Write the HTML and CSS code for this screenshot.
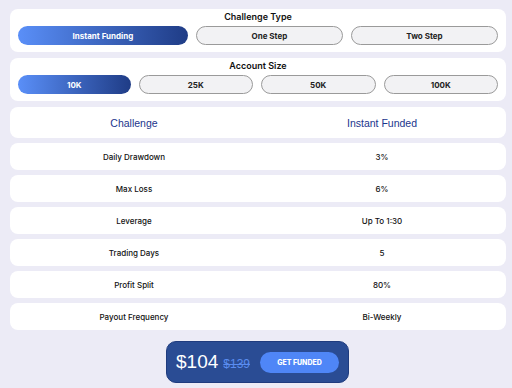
FILE: index.html
```html
<!DOCTYPE html>
<html lang="en">
<head>
    <meta charset="UTF-8">
    <meta name="viewport" content="width=device-width, initial-scale=1.0">
    <title>Challenge Picker</title>
    <link rel="stylesheet" href="styles.css">
</head>
<body>

    <div class="card picker">
        <h3>Challenge Type</h3>
        <div class="options">
            <button class="opt wide active">Instant Funding</button>
            <button class="opt">One Step</button>
            <button class="opt">Two Step</button>
        </div>
    </div>

    <div class="card picker">
        <h3>Account Size</h3>
        <div class="options">
            <button class="opt active">10K</button>
            <button class="opt">25K</button>
            <button class="opt">50K</button>
            <button class="opt">100K</button>
        </div>
    </div>

    <div class="rules">
        <div class="row head"><span>Challenge</span><span>Instant Funded</span></div>
        <div class="row"><span>Daily Drawdown</span><span>3%</span></div>
        <div class="row"><span>Max Loss</span><span>6%</span></div>
        <div class="row"><span>Leverage</span><span>Up To 1:30</span></div>
        <div class="row"><span>Trading Days</span><span>5</span></div>
        <div class="row"><span>Profit Split</span><span>80%</span></div>
        <div class="row"><span>Payout Frequency</span><span>Bi-Weekly</span></div>
    </div>

    <div class="checkout">
        <div class="price">
            <span class="now">$104</span>
            <span class="was">$139</span>
        </div>
        <button class="buy">GET FUNDED</button>
    </div>

</body>
</html>
```

FILE: styles.css
```css
body {
    font-family: Inter, "Liberation Sans", sans-serif;
    background-color: #ecebf6;
    color: #111111;
    margin: 0;
    padding: 9px 6px 0 10px;
}

.card {
    background-color: #ffffff;
    border-radius: 8px;
}

.picker {
    padding: 2px 8px 7px 8px;
    margin-bottom: 6px;
}

.picker h3 {
    margin: 0 0 3px 0;
    text-align: center;
    font-size: 9px;
    font-weight: 600;
    line-height: 12px;
    color: #111111;
}

.options {
    display: flex;
    gap: 8px;
}

.opt {
    flex: 1;
    height: 19px;
    border: 1px solid #9a9a9a;
    border-radius: 10px;
    background-color: #f2f2f4;
    font-family: Inter, sans-serif;
    font-size: 8px;
    font-weight: 700;
    color: #222222;
    cursor: pointer;
    padding: 0;
}

.opt.wide {
    flex: 1.17;
}

.opt.active {
    border: none;
    color: #ffffff;
    background: linear-gradient(90deg, #5a8ff8 0%, #1f3c86 100%);
}

.picker + .rules {
    margin-top: 3px;
}

.rules {
    display: flex;
    flex-direction: column;
    gap: 5px;
}

.row {
    display: grid;
    grid-template-columns: 1fr 1fr;
    align-items: center;
    height: 27px;
    background-color: #ffffff;
    border-radius: 8px;
    font-size: 8px;
    font-weight: 500;
    text-align: center;
}

.row.head {
    height: 31px;
    font-family: "Liberation Sans", Arial, sans-serif;
    font-size: 10.5px;
    font-weight: 400;
    color: #1a358c;
}

.checkout {
    display: flex;
    align-items: center;
    justify-content: space-between;
    width: 183px;
    height: 42px;
    box-sizing: border-box;
    margin: 11px 0 0 156px;
    padding: 0 9px 0 9px;
    background-color: #2a4c94;
    border: 1px solid #1f3b7e;
    border-radius: 10px;
}

.price {
    display: flex;
    align-items: baseline;
    gap: 5px;
    font-family: "Liberation Sans", Arial, sans-serif;
}

.now {
    color: #ffffff;
    font-size: 19px;
}

.was {
    color: #5a8cf0;
    font-size: 12px;
    text-decoration: line-through;
}

.buy {
    width: 79px;
    height: 21px;
    border: none;
    border-radius: 11px;
    background-color: #4f86f7;
    color: #ffffff;
    font-family: Inter, sans-serif;
    font-size: 7px;
    font-weight: 800;
    cursor: pointer;
}
```
